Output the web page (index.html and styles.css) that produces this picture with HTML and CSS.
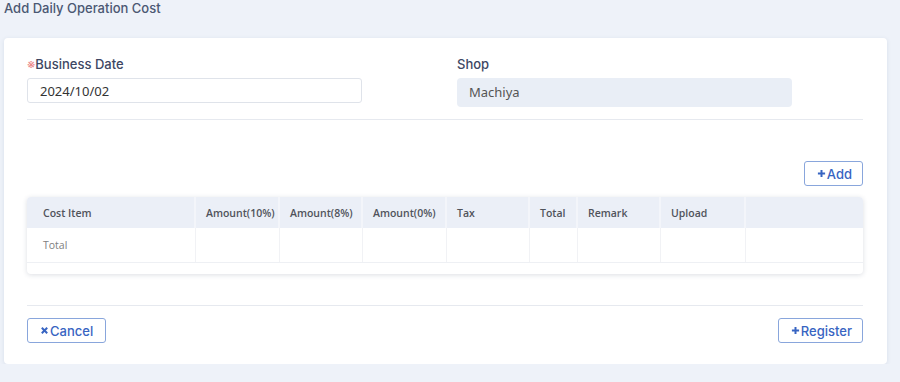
FILE: index.html
```html
<!DOCTYPE html>
<html lang="en">

<head>
    <meta charset="UTF-8">
    <meta name="viewport" content="width=device-width, initial-scale=1.0">
    <title>Add Daily Operation Cost</title>
    <link rel="stylesheet" href="styles.css">
</head>

<body>

    <h1 class="page-title">Add Daily Operation Cost</h1>

    <div class="card">
        <div class="form-row">
            <div class="field">
                <label class="field-label"><span class="required">※</span>Business Date</label>
                <input class="text-input" type="text" value="2024/10/02">
            </div>
            <div class="field field-right">
                <label class="field-label">Shop</label>
                <div class="readonly-box">Machiya</div>
            </div>
        </div>

        <hr class="divider">

        <div class="toolbar">
            <button class="btn">
                <svg class="btn-icon" viewBox="0 0 10 10"><path d="M5 1v8M1 5h8" /></svg>Add
            </button>
        </div>

        <!-- cost table -->
        <div class="table-wrap">
            <table class="cost-table">
                <thead>
                    <tr>
                        <th class="col-item">Cost Item</th>
                        <th class="col-a10">Amount(10%)</th>
                        <th class="col-a8">Amount(8%)</th>
                        <th class="col-a0">Amount(0%)</th>
                        <th class="col-tax">Tax</th>
                        <th class="col-total">Total</th>
                        <th class="col-remark">Remark</th>
                        <th class="col-upload">Upload</th>
                        <th></th>
                    </tr>
                </thead>
                <tbody>
                    <tr>
                        <td>Total</td>
                        <td></td>
                        <td></td>
                        <td></td>
                        <td></td>
                        <td></td>
                        <td></td>
                        <td></td>
                        <td></td>
                    </tr>
                </tbody>
            </table>
            <div class="table-foot"></div>
        </div>

        <hr class="divider divider-bottom">

        <div class="actions">
            <button class="btn btn-cancel">
                <svg class="btn-icon" viewBox="0 0 10 10"><path d="M2 2l6 6M8 2l-6 6" /></svg>Cancel
            </button>
            <button class="btn">
                <svg class="btn-icon" viewBox="0 0 10 10"><path d="M5 1v8M1 5h8" /></svg>Register
            </button>
        </div>
    </div>

</body>

</html>
```

FILE: styles.css
```css
body {
    margin: 0;
    padding: 0;
    background-color: #eef2f9;
    font-family: Inter, "Noto Sans", sans-serif;
}

.page-title {
    margin: 0;
    padding: 0 4px;
    font-size: 13px;
    line-height: 16px;
    font-weight: 500;
    color: #4b5873;
}

.card {
    margin: 22px 13px 0 4px;
    padding: 17px 24px 21px 23px;
    background-color: #fff;
    border-radius: 4px;
    box-shadow: 0 1px 4px rgba(60, 80, 120, 0.12);
}

.form-row {
    display: grid;
    grid-template-columns: 418px 418px;
}

.field-right {
    padding-left: 12px;
}

.field-label {
    display: block;
    font-size: 13px;
    line-height: 18px;
    font-weight: 500;
    color: #3d4763;
    margin-bottom: 5px;
}

.required {
    color: #ec8a8a;
    font-weight: 400;
}

.text-input {
    box-sizing: border-box;
    width: 335px;
    height: 25px;
    padding: 0 12px;
    border: 1px solid #dfe3ea;
    border-radius: 3px;
    font-family: "Noto Sans", sans-serif;
    font-size: 13px;
    color: #333;
    outline: none;
}

.readonly-box {
    box-sizing: border-box;
    width: 335px;
    height: 29px;
    padding: 0 12px;
    line-height: 29px;
    background-color: #e9eef6;
    border-radius: 4px;
    font-family: "Noto Sans", sans-serif;
    font-size: 13px;
    color: #555;
}

.divider {
    margin: 12px 0 0 0;
    border: none;
    border-top: 1px solid #e6e9ef;
}

.divider-bottom {
    margin-top: 31px;
}

.toolbar {
    display: flex;
    justify-content: flex-end;
    margin-top: 41px;
}

.btn {
    display: flex;
    align-items: center;
    gap: 1px;
    height: 25px;
    padding: 0 10px 0 12px;
    background-color: #fff;
    border: 1px solid #89a6dc;
    border-radius: 3px;
    font-family: Inter, "Noto Sans", sans-serif;
    font-size: 13px;
    font-weight: 500;
    color: #3764c2;
    cursor: pointer;
}

.btn-cancel {
    padding-right: 12px;
}

.btn-icon {
    width: 9px;
    height: 9px;
    fill: none;
    stroke: #3764c2;
    stroke-width: 2.2;
}

.table-wrap {
    margin-top: 11px;
    border-radius: 4px;
    box-shadow: 0 1px 5px rgba(40, 50, 80, 0.16);
    overflow: hidden;
}

.cost-table {
    width: 100%;
    table-layout: fixed;
    border-collapse: collapse;
    font-family: "Open Sans", sans-serif;
    font-size: 10.5px;
}

.cost-table th {
    box-sizing: border-box;
    height: 31px;
    padding: 0 0 0 10px;
    text-align: left;
    font-weight: 600;
    color: #50535b;
    background-color: #ebeff7;
    border-right: 2px solid #f3f5fa;
}

.cost-table th:last-child {
    border-right: none;
}

.cost-table td {
    height: 34px;
    padding: 0 0 0 16px;
    color: #808080;
    border-right: 1px solid #f1f2f5;
    border-bottom: 1px solid #eef0f4;
}

.cost-table td:last-child {
    border-right: none;
}

.cost-table th.col-item {
    width: 168px;
    padding-left: 16px;
}

.col-a10 {
    width: 84px;
}

.col-a8 {
    width: 83px;
}

.col-a0 {
    width: 84px;
}

.col-tax {
    width: 83px;
}

.col-total {
    width: 48px;
}

.col-remark {
    width: 83px;
}

.col-upload {
    width: 85px;
}

.table-foot {
    height: 11px;
}

.actions {
    display: flex;
    justify-content: space-between;
    margin-top: 12px;
}
```
